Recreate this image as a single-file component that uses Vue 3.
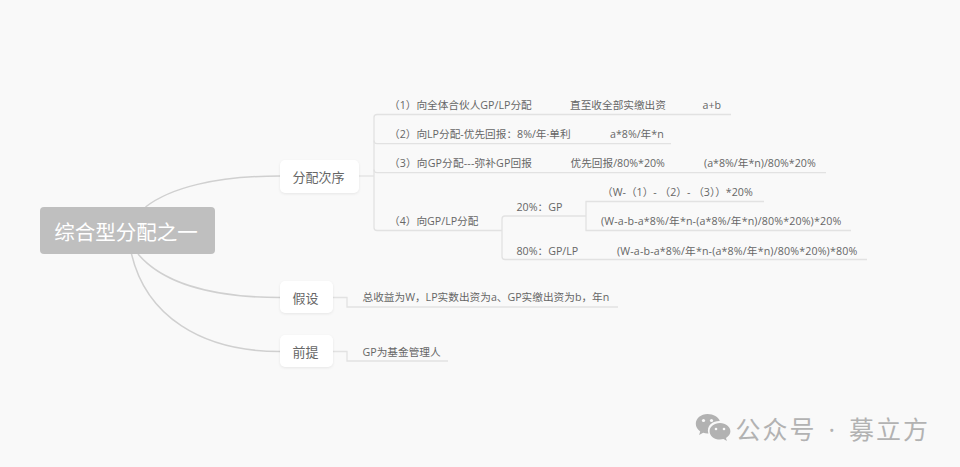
<script setup>
const topics = [
  { text: '分配次序', x: 280, y: 160, w: 79, h: 33 },
  { text: '假设', x: 280, y: 281, w: 53, h: 32 },
  { text: '前提', x: 280, y: 335, w: 53, h: 32 },
]

const labels = [
  { text: '（1）向全体合伙人GP/LP分配', x: 389, y: 105 },
  { text: '直至收全部实缴出资', x: 570, y: 105 },
  { text: 'a+b', x: 702.5, y: 105 },
  { text: '（2）向LP分配-优先回报：8%/年·单利', x: 389, y: 134 },
  { text: 'a*8%/年*n', x: 610, y: 134 },
  { text: '（3）向GP分配---弥补GP回报', x: 389, y: 163, wide: true },
  { text: '优先回报/80%*20%', x: 570.5, y: 163 },
  { text: '(a*8%/年*n)/80%*20%', x: 704, y: 163 },
  { text: '（4）向GP/LP分配', x: 389, y: 221 },
  { text: '20%：GP', x: 516.5, y: 206.5 },
  { text: '（W-（1）- （2）- （3））*20%', x: 602, y: 192 },
  { text: '(W-a-b-a*8%/年*n-(a*8%/年*n)/80%*20%)*20%', x: 601, y: 221, wide: true },
  { text: '80%：GP/LP', x: 516.5, y: 250.5 },
  { text: '(W-a-b-a*8%/年*n-(a*8%/年*n)/80%*20%)*80%', x: 617, y: 250.5, wide: true },
  { text: '总收益为W，LP实数出资为a、GP实缴出资为b，年n', x: 362.5, y: 297 },
  { text: 'GP为基金管理人', x: 362.5, y: 351.5 },
]

const curves = [
  'M145.5 207C170 188 215 176 280 176',
  'M138 254C160 280 205 297.5 280 297.5',
  'M131.5 254C146 315 200 351.5 280 351.5',
]

const lines = [
  // 分配次序 branch
  'M359 176H374',
  'M731 114.5H377Q374 114.5 374 117.5V227.5Q374 230.5 377 230.5H502',
  'M374 140.5Q374 143.7 377 143.7H671',
  'M374 169.5Q374 172.7 377 172.7H826',
  // (4) children
  'M586 216H505Q502 216 502 219V256.5Q502 259.5 505 259.5H867',
  'M764 201.5H586V230.5H851',
  // 假设, 前提
  'M333 297.5H347V307H618',
  'M333 351.5H347V361H448',
]
</script>

<template>
  <div class="page">
    <svg class="links" width="960" height="467" viewBox="0 0 960 467">
      <path v-for="d in curves" :key="d" class="curve" :d="d" />
      <path v-for="d in lines" :key="d" class="line" :d="d" />
    </svg>

    <div class="root-node">综合型分配之一</div>

    <div
      v-for="t in topics"
      :key="t.text"
      class="topic"
      :style="{ left: t.x + 'px', top: t.y + 'px', width: t.w + 'px', height: t.h + 'px' }"
    >
      {{ t.text }}
    </div>

    <span
      v-for="l in labels"
      :key="l.text"
      class="label"
      :class="{ wide: l.wide }"
      :style="{ left: l.x + 'px', top: l.y - 8 + 'px' }"
    >{{ l.text }}</span>

    <div class="watermark">
      <svg class="wechat" width="38" height="32" viewBox="0 0 38 32">
        <path
          fill="#b2b2b2"
          d="M12.5 1C6 1 .8 5.3 .8 10.8c0 3.100 1.700 5.800 4.400 7.600L4.100 22l4.100-2.200c1.400.4 2.800.6 4.300.6h1C13 19.400 12.900 18.400 12.900 17.500c0-5.300 5-9.400 11.200-9.400h.7C23.500 4 18.500 1 12.500 1z"
        />
        <path
          fill="#b2b2b2"
          d="M25 10c-5.900 0-10.400 3.700-10.400 8.300s4.500 8.300 10.400 8.300c1.200 0 2.400-.2 3.500-.5l3.400 1.800-.9-3c2.700-1.500 4.400-3.900 4.400-6.600C35.400 13.700 30.700 10 25 10z"
        />
        <circle cx="8.500" cy="7.500" r="1.600" fill="#f9f9f9" />
        <circle cx="16.500" cy="7.500" r="1.600" fill="#f9f9f9" />
        <circle cx="21" cy="16" r="1.300" fill="#f9f9f9" />
        <circle cx="29" cy="16" r="1.300" fill="#f9f9f9" />
      </svg>
      <span class="watermark-text">公众号 · 募立方</span>
    </div>
  </div>
</template>

<style scoped>
.page {
  position: relative;
  width: 960px;
  height: 467px;
  overflow: hidden;
  background: #f9f9f9;
  font-family: "Open Sans", "Noto Sans CJK SC", sans-serif;
}

.links {
  position: absolute;
  left: 0;
  top: 0;
}

.curve {
  fill: none;
  stroke: #d0d0d0;
  stroke-width: 1.5;
}

.line {
  fill: none;
  stroke: #e2e2e2;
  stroke-width: 1.3;
}

.root-node {
  position: absolute;
  left: 39.5px;
  top: 207px;
  width: 175px;
  height: 47px;
  box-sizing: border-box;
  padding-right: 2px;
  display: flex;
  align-items: center;
  justify-content: center;
  border-radius: 4px;
  background: #bfbfbf;
  color: #fff;
  font-size: 20.5px;
}

.topic {
  position: absolute;
  box-sizing: border-box;
  padding-right: 2px;
  display: flex;
  align-items: center;
  justify-content: center;
  border-radius: 5px;
  background: #fff;
  box-shadow: 0 1px 3px rgba(0, 0, 0, 0.08);
  color: #666;
  font-size: 13px;
}

.label {
  position: absolute;
  color: #666;
  font-size: 10.67px;
  line-height: 16px;
  white-space: nowrap;
}

.label.wide {
  letter-spacing: 0.15px;
}

.watermark {
  position: absolute;
  right: 30px;
  top: 413px;
  display: flex;
  align-items: center;
  gap: 2px;
}

.watermark-text {
  color: #b2b2b2;
  font-size: 25px;
  letter-spacing: 2px;
  word-spacing: 3.5px;
  white-space: nowrap;
  line-height: 32px;
}
</style>
